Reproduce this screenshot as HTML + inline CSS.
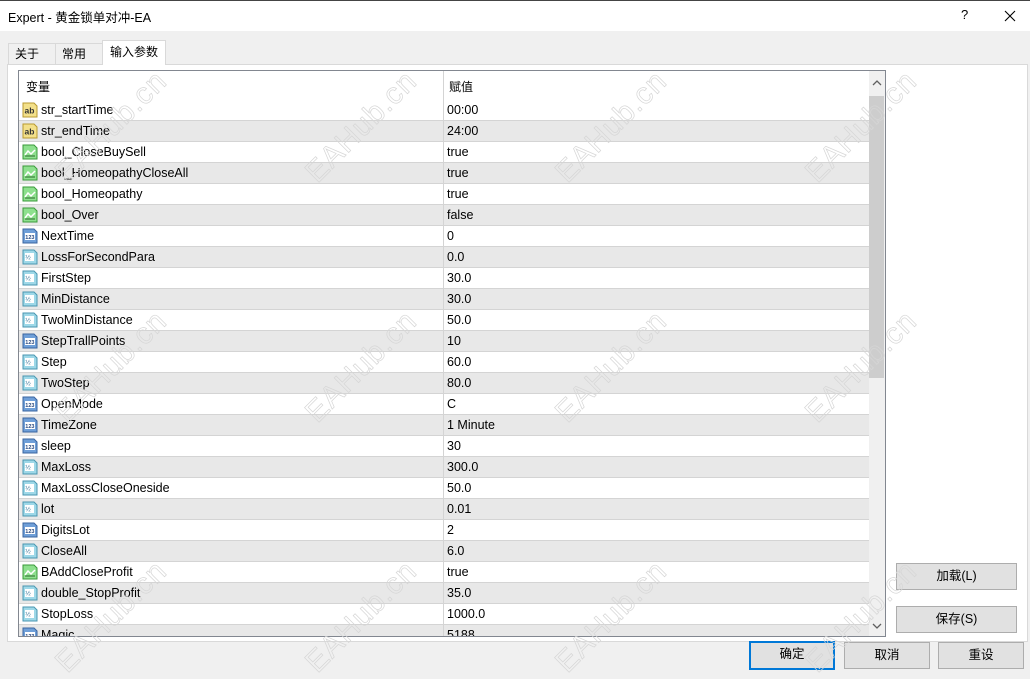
<!DOCTYPE html>
<html><head><meta charset="utf-8">
<style>
*{box-sizing:border-box;margin:0;padding:0}
html,body{width:1030px;height:679px;overflow:hidden}
body{background:#f0f0f0;font-family:"Liberation Sans","Noto Sans CJK SC",sans-serif;font-size:12px;color:#000;position:relative}
.title{position:absolute;left:0;top:0;width:1030px;height:31px;background:#fff;border-top:1px solid #444}
.title .t{position:absolute;left:8px;top:6px;font-size:12.5px}
.title .q{position:absolute;left:961px;top:6px;font-size:13px}
.tab{position:absolute;top:43px;height:22px;border:1px solid #d9d9d9;border-bottom:none;background:#f0f0f0;padding:1px 0 0 6px;font-size:12px}
.tab.a{top:40px;height:25px;background:#fff;border-color:#d9d9d9;padding:2px 0 0 7px;z-index:2}
.panel{position:absolute;left:7px;top:64px;width:1021px;height:578px;background:#fff;border:1px solid #d9d9d9}
.list{position:absolute;left:18px;top:70px;width:868px;height:567px;border:1px solid #828790;background:#fff;overflow:hidden}
.hdr{position:absolute;left:0;top:0;width:850px;height:29px}
.hdr span{position:absolute;top:7px}
.row{position:absolute;left:0;width:850px;height:21px;border-bottom:1px solid #d4d4d4}
.row.g{background:#e8e8e8}
.row .n{position:absolute;left:22px;top:3px;font-size:12.5px}
.row .v{position:absolute;left:428px;top:3px;font-size:12.5px}
.row svg{position:absolute;left:3px;top:2px}
.div{position:absolute;left:424px;top:0;width:1px;height:567px;background:#d4d4d4}
.sb{position:absolute;left:850px;top:0;width:16px;height:565px;background:#f0f0f0}
.thumb{position:absolute;left:850px;top:25px;width:15px;height:282px;background:#cdcdcd}
.btn{position:absolute;height:27px;background:#e1e1e1;border:1px solid #adadad;text-align:center;line-height:25px;font-size:12.5px}
.btn.f{border:2px solid #0078d7;line-height:23px}
.wm{position:absolute;font-size:30px;font-family:"Liberation Sans",sans-serif;color:transparent;-webkit-text-stroke:0.7px #d6d6d6;transform:rotate(-45deg);white-space:nowrap;z-index:5;pointer-events:none;letter-spacing:1px}
</style></head><body>
<div class="title"><span class="t">Expert - 黄金锁单对冲-EA</span><span class="q">?</span>
<svg style="position:absolute;left:1004px;top:9px" width="12" height="12"><path d="M1 1L11 11M11 1L1 11" stroke="#000" stroke-width="1.1"/></svg></div>
<div class="tab" style="left:8px;width:48px">关于</div>
<div class="tab" style="left:55px;width:48px">常用</div>
<div class="tab a" style="left:102px;width:64px">输入参数</div>
<div class="panel"></div>

<svg width="0" height="0" style="position:absolute">
<defs>
<g id="ab"><path d="M1 1h11l3 3v11H1z" fill="#f3e08a" stroke="#b89a30"/><text x="2.5" y="11.5" font-size="8.5" font-family="Liberation Sans" fill="#333" font-weight="bold">ab</text></g>
<g id="bl"><path d="M1 1h11l3 3v11H1z" fill="#8ee08e" stroke="#3a9a3a"/><path d="M3 11l3-4 3 3 4-4" stroke="#fff" stroke-width="1.5" fill="none"/><path d="M3 12h10" stroke="#2a6a2a" stroke-width="1"/></g>
<g id="in"><path d="M1 1h11l3 3v11H1z" fill="#6f9fd8" stroke="#3a64a0"/><rect x="3" y="5" width="10" height="7" fill="#fff"/><text x="3.3" y="11" font-size="5.5" font-family="Liberation Sans" fill="#2a4a80" font-weight="bold">123</text></g>
<g id="db"><path d="M1 1h11l3 3v11H1z" fill="#9ed8e8" stroke="#4a96b0"/><rect x="3" y="4" width="9" height="8" fill="#fff"/><text x="3.3" y="10.5" font-size="6.5" font-family="Liberation Sans" fill="#2a6a90">½</text></g>
</defs></svg>

<div class="list">
<div class="hdr"><span style="left:7px">变量</span><span style="left:430px">赋值</span></div>
<div class="row" style="top:29px"><svg width="16" height="16"><use href="#ab"/></svg><span class="n">str_startTime</span><span class="v">00:00</span></div>
<div class="row g" style="top:50px"><svg width="16" height="16"><use href="#ab"/></svg><span class="n">str_endTime</span><span class="v">24:00</span></div>
<div class="row" style="top:71px"><svg width="16" height="16"><use href="#bl"/></svg><span class="n">bool_CloseBuySell</span><span class="v">true</span></div>
<div class="row g" style="top:92px"><svg width="16" height="16"><use href="#bl"/></svg><span class="n">bool_HomeopathyCloseAll</span><span class="v">true</span></div>
<div class="row" style="top:113px"><svg width="16" height="16"><use href="#bl"/></svg><span class="n">bool_Homeopathy</span><span class="v">true</span></div>
<div class="row g" style="top:134px"><svg width="16" height="16"><use href="#bl"/></svg><span class="n">bool_Over</span><span class="v">false</span></div>
<div class="row" style="top:155px"><svg width="16" height="16"><use href="#in"/></svg><span class="n">NextTime</span><span class="v">0</span></div>
<div class="row g" style="top:176px"><svg width="16" height="16"><use href="#db"/></svg><span class="n">LossForSecondPara</span><span class="v">0.0</span></div>
<div class="row" style="top:197px"><svg width="16" height="16"><use href="#db"/></svg><span class="n">FirstStep</span><span class="v">30.0</span></div>
<div class="row g" style="top:218px"><svg width="16" height="16"><use href="#db"/></svg><span class="n">MinDistance</span><span class="v">30.0</span></div>
<div class="row" style="top:239px"><svg width="16" height="16"><use href="#db"/></svg><span class="n">TwoMinDistance</span><span class="v">50.0</span></div>
<div class="row g" style="top:260px"><svg width="16" height="16"><use href="#in"/></svg><span class="n">StepTrallPoints</span><span class="v">10</span></div>
<div class="row" style="top:281px"><svg width="16" height="16"><use href="#db"/></svg><span class="n">Step</span><span class="v">60.0</span></div>
<div class="row g" style="top:302px"><svg width="16" height="16"><use href="#db"/></svg><span class="n">TwoStep</span><span class="v">80.0</span></div>
<div class="row" style="top:323px"><svg width="16" height="16"><use href="#in"/></svg><span class="n">OpenMode</span><span class="v">C</span></div>
<div class="row g" style="top:344px"><svg width="16" height="16"><use href="#in"/></svg><span class="n">TimeZone</span><span class="v">1 Minute</span></div>
<div class="row" style="top:365px"><svg width="16" height="16"><use href="#in"/></svg><span class="n">sleep</span><span class="v">30</span></div>
<div class="row g" style="top:386px"><svg width="16" height="16"><use href="#db"/></svg><span class="n">MaxLoss</span><span class="v">300.0</span></div>
<div class="row" style="top:407px"><svg width="16" height="16"><use href="#db"/></svg><span class="n">MaxLossCloseOneside</span><span class="v">50.0</span></div>
<div class="row g" style="top:428px"><svg width="16" height="16"><use href="#db"/></svg><span class="n">lot</span><span class="v">0.01</span></div>
<div class="row" style="top:449px"><svg width="16" height="16"><use href="#in"/></svg><span class="n">DigitsLot</span><span class="v">2</span></div>
<div class="row g" style="top:470px"><svg width="16" height="16"><use href="#db"/></svg><span class="n">CloseAll</span><span class="v">6.0</span></div>
<div class="row" style="top:491px"><svg width="16" height="16"><use href="#bl"/></svg><span class="n">BAddCloseProfit</span><span class="v">true</span></div>
<div class="row g" style="top:512px"><svg width="16" height="16"><use href="#db"/></svg><span class="n">double_StopProfit</span><span class="v">35.0</span></div>
<div class="row" style="top:533px"><svg width="16" height="16"><use href="#db"/></svg><span class="n">StopLoss</span><span class="v">1000.0</span></div>
<div class="row g" style="top:554px"><svg width="16" height="16"><use href="#in"/></svg><span class="n">Magic</span><span class="v">5188</span></div>
<div class="div"></div>
<div class="sb"></div>
<div class="thumb"></div>
<svg style="position:absolute;left:853px;top:9px" width="10" height="6"><path d="M1 5l4-4 4 4" stroke="#606060" stroke-width="1.3" fill="none"/></svg>
<svg style="position:absolute;left:853px;top:552px" width="10" height="6"><path d="M1 1l4 4 4-4" stroke="#606060" stroke-width="1.3" fill="none"/></svg>
</div>

<div class="btn" style="left:896px;top:563px;width:121px">加载(L)</div>
<div class="btn" style="left:896px;top:606px;width:121px">保存(S)</div>
<div class="btn f" style="left:749px;top:641px;width:86px;height:29px">确定</div>
<div class="btn" style="left:844px;top:642px;width:86px">取消</div>
<div class="btn" style="left:938px;top:642px;width:86px">重设</div>

<div class="wm" style="left:40px;top:110px">EAHub.cn</div>
<div class="wm" style="left:290px;top:110px">EAHub.cn</div>
<div class="wm" style="left:540px;top:110px">EAHub.cn</div>
<div class="wm" style="left:790px;top:110px">EAHub.cn</div>
<div class="wm" style="left:40px;top:350px">EAHub.cn</div>
<div class="wm" style="left:290px;top:350px">EAHub.cn</div>
<div class="wm" style="left:540px;top:350px">EAHub.cn</div>
<div class="wm" style="left:790px;top:350px">EAHub.cn</div>
<div class="wm" style="left:40px;top:600px">EAHub.cn</div>
<div class="wm" style="left:290px;top:600px">EAHub.cn</div>
<div class="wm" style="left:540px;top:600px">EAHub.cn</div>
<div class="wm" style="left:790px;top:600px">EAHub.cn</div>
</body></html>
